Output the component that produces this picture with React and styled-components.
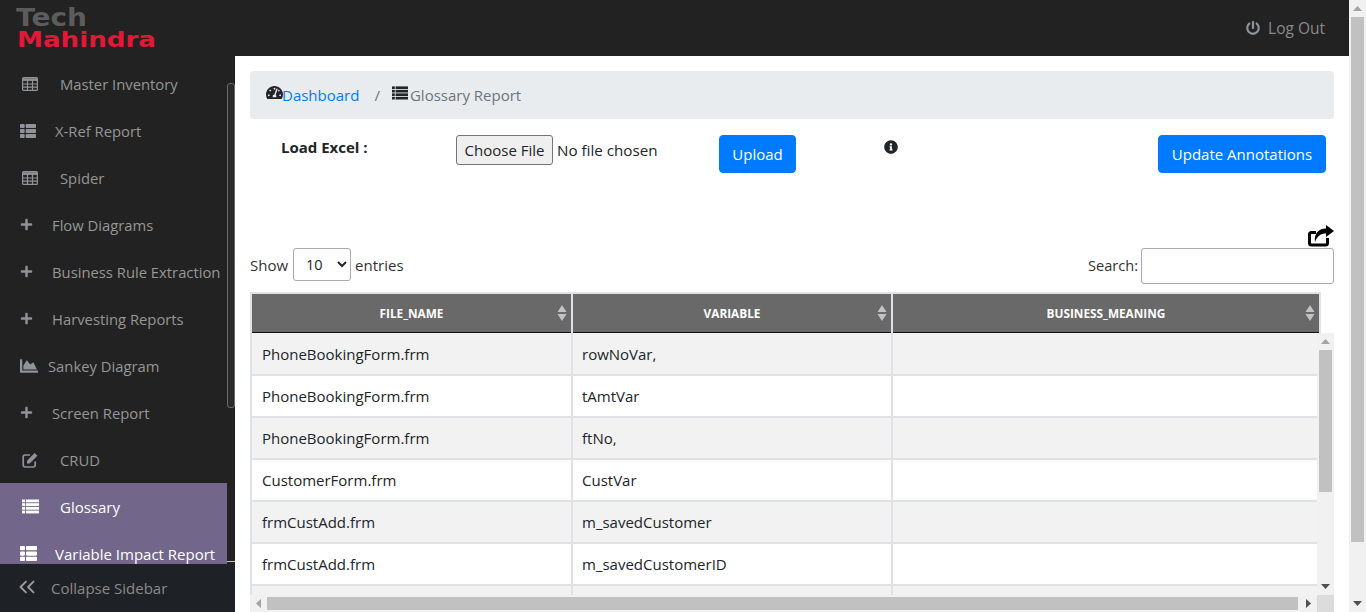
import React from "react";
import styled, { createGlobalStyle } from "styled-components";
import {
  FaThList,
  FaPlus,
  FaChartArea,
  FaPowerOff,
  FaTachometerAlt,
  FaInfoCircle,
} from "react-icons/fa";
import { ChevronsLeft } from "lucide-react";

const FONT = `"Open Sans", "Noto Sans", sans-serif`;

const GlobalStyle = createGlobalStyle`
  html, body {
    margin: 0;
    height: 100%;
    overflow: hidden;
    background: #fff;
    font-family: ${FONT};
    color: #212529;
  }
  * { box-sizing: border-box; }
`;

const Page = styled.div`
  display: flex;
  width: 1366px;
  height: 612px;
  overflow: hidden;
`;

const Shell = styled.div`
  width: 1349px;
  height: 612px;
  display: flex;
  flex-direction: column;
`;

const Header = styled.header`
  height: 56px;
  flex: none;
  background: #222;
  display: flex;
  align-items: center;
  justify-content: space-between;
  padding: 0 24px 0 16px;
`;

const Logo = styled.svg`
  display: block;
  width: 142px;
  height: 50px;
`;

const LogOut = styled.a`
  display: flex;
  align-items: center;
  gap: 8px;
  color: #8a8a8a;
  font-size: 15.5px;
  svg { width: 14px; height: 14px; color: #8d9499; }
`;

const Body = styled.div`
  flex: 1;
  display: flex;
  min-height: 0;
`;

const Sidebar = styled.aside`
  position: relative;
  width: 235px;
  flex: none;
  background: #222;
  display: flex;
  flex-direction: column;
`;

const Menu = styled.nav`
  height: 508px;
  flex: none;
  width: 227px;
  padding-top: 4px;
  overflow: hidden;
`;

const MenuItem = styled.div`
  height: 47px;
  display: flex;
  align-items: center;
  padding-left: ${(p) => p.$pad}px;
  font-size: ${(p) => (p.$active ? 15 : 14.8)}px;
  white-space: nowrap;
  color: ${(p) => (p.$active ? "#fff" : "#969696")};
  background: ${(p) => (p.$active ? "#72678a" : "transparent")};
`;

const MenuIcon = styled.span`
  width: ${(p) => p.$width}px;
  flex: none;
  display: flex;
  align-items: center;
  color: ${(p) => (p.$active ? "#fff" : "#8e949a")};
  svg { width: ${(p) => p.$size}px; height: ${(p) => p.$size}px; display: block; }
`;

const SideThumb = styled.div`
  position: absolute;
  left: 227px;
  top: 27px;
  width: 8px;
  height: 325px;
  border: 1px solid #6a6a6a;
  border-radius: 3px;
  background: #2a2a2a;
`;

const SideRule = styled.div`
  position: absolute;
  left: 227px;
  top: 505px;
  width: 8px;
  height: 1px;
  background: #c4c4c4;
`;

const Collapse = styled.div`
  height: 48px;
  flex: none;
  background: #1e2126;
  display: flex;
  align-items: center;
  gap: 11px;
  padding-left: 14px;
  color: #8a8a8a;
  font-size: 15px;
  svg { width: 26px; height: 26px; display: block; color: #9a9a9a; margin-top: -3px; }
`;

const Main = styled.main`
  flex: 1;
  min-width: 0;
  padding: 15px 15px 0;
  display: flex;
  flex-direction: column;
`;

const Breadcrumb = styled.div`
  height: 48px;
  flex: none;
  background: #e9ecef;
  border-radius: 4px;
  display: flex;
  align-items: center;
  padding-left: 16px;
  font-size: 15px;
`;

const CrumbIcon = styled.span`
  display: flex;
  color: #212529;
  margin-top: -5px;
  svg { display: block; width: ${(p) => p.$size}px; height: ${(p) => p.$size}px; }
`;

const CrumbLink = styled.a`
  color: #007bff;
  margin-left: -1px;
`;

const CrumbSep = styled.span`
  color: #6c757d;
  margin: 0 12px 0 15px;
`;

const CrumbCurrent = styled.span`
  color: #6c757d;
  margin-left: 2px;
`;

const FormRow = styled.div`
  margin-top: 16px;
  height: 38px;
  flex: none;
  display: grid;
  grid-template-columns: 206px 263px 165px 1fr auto;
`;

const FieldLabel = styled.label`
  padding-left: 31px;
  font-size: 15px;
  font-weight: 700;
  line-height: 25px;
`;

const FileInput = styled.input`
  font-family: ${FONT};
  font-size: 15.2px;
  height: 30px;
  width: 240px;
  color: #212529;
  &::file-selector-button {
    font-family: ${FONT};
    font-size: 15px;
    height: 30px;
    width: 97px;
    padding: 0;
    margin-right: 4px;
    border: 1px solid #767676;
    border-radius: 3px;
    background: #efefef;
    color: #212529;
  }
`;

const PrimaryButton = styled.button`
  font-family: ${FONT};
  font-size: 15px;
  height: 38px;
  width: ${(p) => p.$width}px;
  padding: 0;
  border: 1px solid #007bff;
  border-radius: 4px;
  background: #007bff;
  color: #fff;
  margin-right: ${(p) => (p.$end ? 8 : 0)}px;
`;

const InfoMark = styled.span`
  display: block;
  padding-top: 5px;
  svg { width: 14px; height: 14px; display: block; color: #212529; }
`;

const ExportRow = styled.div`
  margin-top: 52px;
  height: 23px;
  flex: none;
  display: flex;
  justify-content: flex-end;
  svg { width: 26px; height: 23px; display: block; }
`;

const Controls = styled.div`
  height: 36px;
  flex: none;
  display: flex;
  justify-content: space-between;
  margin-bottom: 8px;
  font-size: 15px;
  line-height: 35px;
  color: #333;
`;

const Length = styled.label`
  display: flex;
  align-items: flex-start;
  gap: 4px;
`;

const LengthSelect = styled.select`
  font-family: ${FONT};
  font-size: 14.5px;
  width: 58px;
  height: 33px;
  margin-left: 1px;
  padding-left: 8px;
  border: 1px solid #aaa;
  border-radius: 3px;
  background: #fff;
  color: #212529;
`;

const SearchBox = styled.label`
  display: flex;
  align-items: flex-start;
  gap: 3px;
  font-size: 14.6px;
`;

const SearchInput = styled.input`
  width: 193px;
  height: 36px;
  border: 1px solid #aaa;
  border-radius: 3px;
  background: #fff;
`;

const HeadRow = styled.div`
  width: 1071px;
  height: 41px;
  flex: none;
  display: grid;
  grid-template-columns: 319px 318px 426px;
  gap: 2px;
  padding: 2px 2px 0;
  background: #dee2e6;
`;

const HeadCell = styled.div`
  position: relative;
  background: #696969;
  border-bottom: 1px solid #111;
  display: flex;
  align-items: center;
  justify-content: center;
  color: #fff;
  font-size: 11.8px;
  font-weight: 700;
`;

const SortMark = styled.svg`
  position: absolute;
  right: 4px;
  top: 11px;
  width: 10px;
  height: 16px;
  fill: #c2c2c2;
`;

const TableFrame = styled.div`
  height: 279px;
  flex: none;
  display: flex;
  flex-direction: column;
`;

const TableMiddle = styled.div`
  height: 262px;
  flex: none;
  display: flex;
`;

const Rows = styled.div`
  flex: 1;
  min-width: 0;
  overflow: hidden;
`;

const Row = styled.div`
  height: 42px;
  display: grid;
  grid-template-columns: 319px 318px 1fr;
  gap: 2px;
  padding: 0 0 2px 2px;
  background: #dee2e6;
  &:first-child { height: 43px; }
`;

const Cell = styled.div`
  display: flex;
  align-items: center;
  padding-left: ${(p) => (p.$second ? 9 : 10)}px;
  font-size: 15px;
  color: #212529;
  background: ${(p) => (p.$odd ? "#f2f2f2" : "#fff")};
`;

const VBar = styled.div`
  width: 17px;
  flex: none;
  background: #f1f1f1;
  display: flex;
  flex-direction: column;
`;

const ArrowBox = styled.div`
  height: ${(p) => p.$size}px;
  flex: none;
  display: flex;
  align-items: center;
  justify-content: center;
  svg { display: block; width: 9px; height: 9px; fill: ${(p) => p.$fill || "#505050"}; }
`;

const VThumb = styled.div`
  margin: 0 2px;
  height: ${(p) => p.$height}px;
  flex: none;
  background: #c1c1c1;
`;

const Spacer = styled.div`
  flex: 1;
`;

const HBarRow = styled.div`
  height: 17px;
  flex: none;
  display: flex;
`;

const HBar = styled.div`
  flex: 1;
  background: #f1f1f1;
  display: flex;
  align-items: center;
`;

const HArrow = styled.div`
  width: 17px;
  flex: none;
  display: flex;
  justify-content: center;
  svg { display: block; width: 9px; height: 9px; fill: ${(p) => p.$fill}; }
`;

const HThumb = styled.div`
  width: 1031px;
  height: 13px;
  background: #c1c1c1;
`;

const Corner = styled.div`
  width: 17px;
  flex: none;
  background: #dcdcdc;
`;

const PageBar = styled(VBar)`
  height: 612px;
`;

const Up = () => (
  <svg viewBox="0 0 9 9"><path d="M4.5 2 9 7H0z" /></svg>
);
const Down = () => (
  <svg viewBox="0 0 9 9"><path d="M0 2h9L4.5 7z" /></svg>
);
const Left = () => (
  <svg viewBox="0 0 9 9"><path d="M7 0v9L2 4.5z" /></svg>
);
const Right = () => (
  <svg viewBox="0 0 9 9"><path d="M2 0l5 4.5L2 9z" /></svg>
);

// the old font-awesome list: thin gaps between the bars
const ListIcon = () => (
  <svg viewBox="0 0 17 14" fill="currentColor">
    <rect x="0" y="0" width="3" height="2.8" />
    <rect x="3.8" y="0" width="13.2" height="2.8" />
    <rect x="0" y="3.7" width="3" height="2.8" />
    <rect x="3.8" y="3.7" width="13.2" height="2.8" />
    <rect x="0" y="7.4" width="3" height="2.8" />
    <rect x="3.8" y="7.4" width="13.2" height="2.8" />
    <rect x="0" y="11.1" width="3" height="2.8" />
    <rect x="3.8" y="11.1" width="13.2" height="2.8" />
  </svg>
);

const GridIcon = () => (
  <svg viewBox="0 0 16 16" fill="none" stroke="currentColor" strokeWidth="1.2">
    <rect x="0.6" y="1.6" width="14.8" height="12.8" rx="1" />
    <path d="M0.6 3.6h14.8" strokeWidth="2.6" />
    <path d="M0.6 8h14.8M0.6 11.2h14.8M5.5 3v11M10.5 3v11" />
  </svg>
);

const EditIcon = () => (
  <svg viewBox="0 0 16 16">
    <path
      d="M8 3H3a1.8 1.8 0 0 0-1.8 1.8v8.4A1.8 1.8 0 0 0 3 15h8.4a1.8 1.8 0 0 0 1.8-1.8V9.5"
      fill="none"
      stroke="currentColor"
      strokeWidth="1.7"
    />
    <path d="M5 11.4V8.7L12.6 1l2.8 2.8L7.7 11.4z" fill="currentColor" />
  </svg>
);

const ShareIcon = () => (
  <svg viewBox="0 0 26 23">
    <path
      d="M8 7.5H3.5a2 2 0 0 0-2 2V18a2 2 0 0 0 2 2h14a2 2 0 0 0 2-2v-5"
      fill="none"
      stroke="#000"
      strokeWidth="3"
    />
    <path d="M18 0l8 6-8 6V8.5c-5 0-9 2.5-11 8.5C6 9 10 3.5 18 3.5z" fill="#000" />
  </svg>
);

const menu = [
  { label: "Master Inventory", Icon: GridIcon, pad: 22, text: 60, size: 16 },
  { label: "X-Ref Report", Icon: FaThList, pad: 20, text: 55, size: 16 },
  { label: "Spider", Icon: GridIcon, pad: 22, text: 60, size: 16 },
  { label: "Flow Diagrams", Icon: FaPlus, pad: 20, text: 52, size: 13 },
  { label: "Business Rule Extraction", Icon: FaPlus, pad: 20, text: 52, size: 13 },
  { label: "Harvesting Reports", Icon: FaPlus, pad: 20, text: 52, size: 13 },
  { label: "Sankey Diagram", Icon: FaChartArea, pad: 20, text: 48, size: 18 },
  { label: "Screen Report", Icon: FaPlus, pad: 20, text: 52, size: 13 },
  { label: "CRUD", Icon: EditIcon, pad: 22, text: 60, size: 16 },
  { label: "Glossary", Icon: ListIcon, pad: 22, text: 60, size: 17, active: true },
  { label: "Variable Impact Report", Icon: FaThList, pad: 20, text: 55, size: 17, active: true },
];

const rows = [
  ["PhoneBookingForm.frm", "rowNoVar,"],
  ["PhoneBookingForm.frm", "tAmtVar"],
  ["PhoneBookingForm.frm", "ftNo,"],
  ["CustomerForm.frm", "CustVar"],
  ["frmCustAdd.frm", "m_savedCustomer"],
  ["frmCustAdd.frm", "m_savedCustomerID"],
  ["", ""],
];

const columns = ["FILE_NAME", "VARIABLE", "BUSINESS_MEANING"];

const App = () => {
  return (
    <Page>
      <GlobalStyle />
      <Shell>
        <Header>
          <Logo viewBox="0 0 142 50">
            <text
              x="0"
              y="23"
              fontFamily="DejaVu Sans"
              fontWeight="700"
              fontSize="24.5"
              fill="#5c5c5c"
              textLength="71"
              lengthAdjust="spacingAndGlyphs"
            >
              Tech
            </text>
            <text
              x="1"
              y="44"
              fontFamily="DejaVu Sans"
              fontWeight="700"
              fontSize="20.5"
              fill="#e31837"
              textLength="139"
              lengthAdjust="spacingAndGlyphs"
            >
              Mahindra
            </text>
          </Logo>
          <LogOut>
            <FaPowerOff />
            Log Out
          </LogOut>
        </Header>
        <Body>
          <Sidebar>
            <Menu>
              {menu.map(({ label, Icon, pad, text, size, active }) => (
                <MenuItem key={label} $pad={pad} $active={active}>
                  <MenuIcon $width={text - pad} $size={size} $active={active}>
                    <Icon />
                  </MenuIcon>
                  {label}
                </MenuItem>
              ))}
            </Menu>
            <SideThumb />
            <SideRule />
            <Collapse>
              <ChevronsLeft strokeWidth={1.8} />
              Collapse Sidebar
            </Collapse>
          </Sidebar>
          <Main>
            <Breadcrumb>
              <CrumbIcon $size={17}>
                <FaTachometerAlt />
              </CrumbIcon>
              <CrumbLink>Dashboard</CrumbLink>
              <CrumbSep>/</CrumbSep>
              <CrumbIcon $size={16}>
                <ListIcon />
              </CrumbIcon>
              <CrumbCurrent>Glossary Report</CrumbCurrent>
            </Breadcrumb>
            <FormRow>
              <FieldLabel>Load Excel :</FieldLabel>
              <div>
                <FileInput type="file" />
              </div>
              <div>
                <PrimaryButton $width={77}>Upload</PrimaryButton>
              </div>
              <InfoMark>
                <FaInfoCircle />
              </InfoMark>
              <PrimaryButton $width={168} $end>
                Update Annotations
              </PrimaryButton>
            </FormRow>
            <ExportRow>
              <ShareIcon />
            </ExportRow>
            <Controls>
              <Length>
                Show
                <LengthSelect defaultValue="10">
                  <option>10</option>
                  <option>25</option>
                  <option>50</option>
                </LengthSelect>
                entries
              </Length>
              <SearchBox>
                Search:
                <SearchInput />
              </SearchBox>
            </Controls>
            <HeadRow>
              {columns.map((c) => (
                <HeadCell key={c}>
                  {c}
                  <SortMark viewBox="0 0 10 16">
                    <path d="M5 0l4.5 7H.5zM.5 9h9L5 16z" />
                  </SortMark>
                </HeadCell>
              ))}
            </HeadRow>
            <TableFrame>
              <TableMiddle>
                <Rows>
                  {rows.map((r, i) => (
                    <Row key={i}>
                      <Cell $odd={i % 2 === 0}>{r[0]}</Cell>
                      <Cell $odd={i % 2 === 0} $second>{r[1]}</Cell>
                      <Cell $odd={i % 2 === 0} />
                    </Row>
                  ))}
                </Rows>
                <VBar>
                  <ArrowBox $size={17} $fill="#a3a3a3">
                    <Up />
                  </ArrowBox>
                  <VThumb $height={142} />
                  <Spacer />
                  <ArrowBox $size={17}>
                    <Down />
                  </ArrowBox>
                </VBar>
              </TableMiddle>
              <HBarRow>
                <HBar>
                  <HArrow $fill="#a3a3a3">
                    <Left />
                  </HArrow>
                  <HThumb />
                  <Spacer />
                  <HArrow $fill="#505050">
                    <Right />
                  </HArrow>
                </HBar>
                <Corner />
              </HBarRow>
            </TableFrame>
          </Main>
        </Body>
      </Shell>
      <PageBar>
        <ArrowBox $size={17} $fill="#a3a3a3">
          <Up />
        </ArrowBox>
        <VThumb $height={525} />
        <Spacer />
        <ArrowBox $size={17}>
          <Down />
        </ArrowBox>
      </PageBar>
    </Page>
  );
};

export default App;
